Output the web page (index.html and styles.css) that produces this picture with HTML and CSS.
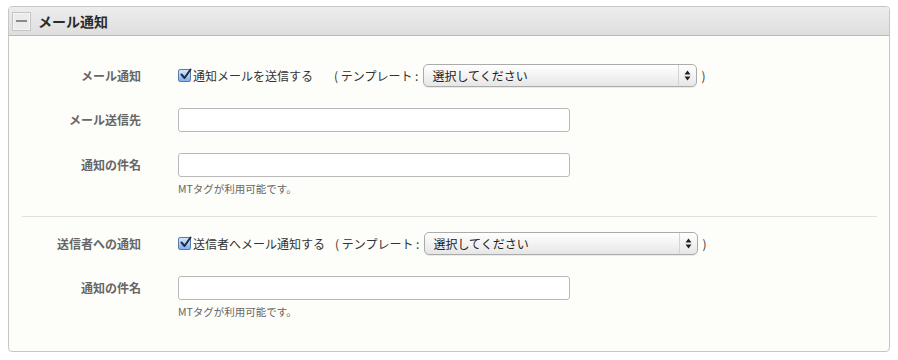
FILE: index.html
```html
<!DOCTYPE html>
<html lang="ja">
<head>
<meta charset="utf-8">
<title>メール通知</title>
<link rel="stylesheet" href="styles.css">
</head>
<body>
<div class="box">
  <div class="box-header">
    <span class="toggle"><span class="toggle-bar"></span></span>
    <h2 class="box-title">メール通知</h2>
  </div>
  <div class="box-body">
    <div class="row row-first">
      <div class="label">メール通知</div>
      <div class="field inline">
        <span class="check"><svg width="13" height="13" viewBox="0 0 13 13"><path d="M2.5 6.5 L5.5 10 L11.5 1.5" fill="none" stroke="#1b2b4a" stroke-width="2" stroke-linecap="round" stroke-linejoin="round"/></svg></span>
        <span class="check-text">通知メールを送信する</span>
        <span class="tpl tpl-wide">( テンプレート :</span>
        <span class="select"><span class="select-text">選択してください</span><span class="select-arrows"><svg width="7" height="11" viewBox="0 0 7 11"><path d="M3.5 0.5 L6.5 4.5 L0.5 4.5 Z M3.5 10.5 L6.5 6.5 L0.5 6.5 Z" fill="#222"/></svg></span></span>
        <span class="paren">)</span>
      </div>
    </div>
    <div class="row">
      <div class="label">メール送信先</div>
      <div class="field"><span class="input"></span></div>
    </div>
    <div class="row">
      <div class="label">通知の件名</div>
      <div class="field">
        <span class="input"></span>
        <div class="hint">MTタグが利用可能です。</div>
      </div>
    </div>
    <div class="divider"></div>
    <div class="row row-after-divider">
      <div class="label">送信者への通知</div>
      <div class="field inline">
        <span class="check"><svg width="13" height="13" viewBox="0 0 13 13"><path d="M2.5 6.5 L5.5 10 L11.5 1.5" fill="none" stroke="#1b2b4a" stroke-width="2" stroke-linecap="round" stroke-linejoin="round"/></svg></span>
        <span class="check-text">送信者へメール通知する</span>
        <span class="tpl">( テンプレート :</span>
        <span class="select"><span class="select-text">選択してください</span><span class="select-arrows"><svg width="7" height="11" viewBox="0 0 7 11"><path d="M3.5 0.5 L6.5 4.5 L0.5 4.5 Z M3.5 10.5 L6.5 6.5 L0.5 6.5 Z" fill="#222"/></svg></span></span>
        <span class="paren">)</span>
      </div>
    </div>
    <div class="row">
      <div class="label">通知の件名</div>
      <div class="field">
        <span class="input"></span>
        <div class="hint">MTタグが利用可能です。</div>
      </div>
    </div>
  </div>
</div>
</body>
</html>
```

FILE: styles.css
```css
* { box-sizing: border-box; }
html, body { margin: 0; padding: 0; background: #ffffff; }
body {
  padding: 6px 8px 0 8px;
  font-family: "Noto Sans CJK JP", "Liberation Sans", sans-serif;
  font-size: 12px;
  color: #333;
}
.box {
  width: 882px;
  height: 346px;
  border: 1px solid #c6c6c2;
  border-radius: 4px;
  background: #fdfdf9;
  overflow: hidden;
}
.box-header {
  height: 29px;
  display: flex;
  align-items: center;
  padding-left: 3px;
  background: linear-gradient(#ededed, #dedede);
  border-bottom: 1px solid #b9b9b9;
}
.toggle {
  width: 19px;
  height: 19px;
  border: 1px solid #c4c4c4;
  background: #ebebeb;
  box-shadow: inset 0 0 0 1px #f6f6f6;
  display: flex;
  align-items: center;
  justify-content: center;
}
.toggle-bar {
  width: 11px;
  height: 2px;
  background: #8a8a8a;
}
.box-title {
  margin: 0 0 0 7px;
  font-size: 14px;
  font-weight: bold;
  color: #2b2b2b;
  line-height: 20px;
}
.box-body {
  padding: 28px 12px 0 13px;
}
.row {
  display: grid;
  grid-template-columns: 119px 1fr;
  column-gap: 37px;
  margin-top: 21px;
}
.row-first { margin-top: 0; }
.row-after-divider { margin-top: 15px; }
.label {
  text-align: right;
  font-weight: bold;
  color: #666;
  line-height: 24px;
  height: 24px;
}
.field.inline {
  display: flex;
  align-items: center;
  height: 23px;
  color: #333;
}
.row-first .label, .row-after-divider .label { line-height: 23px; height: 23px; }
.check {
  width: 13px;
  height: 13px;
  border: 1px solid #5b7aa8;
  border-radius: 2px;
  background: linear-gradient(#d7e6fb, #7fb0ee);
  display: inline-flex;
  margin-right: 2px;
  position: relative;
}
.check svg { position: absolute; left: 0; top: -2px; }
.check-text { font-size: 12px; }
.tpl { margin-left: 10px; margin-right: 5px; }
.tpl-wide { margin-left: 21px; margin-right: 5px; }
.select {
  width: 274px;
  height: 23px;
  border: 1px solid #ababab;
  border-radius: 5px;
  background: linear-gradient(#ffffff, #f3f3f3 50%, #e6e6e6);
  box-shadow: 0 1px 1px rgba(0,0,0,0.08);
  display: flex;
  align-items: center;
}
.select-text {
  flex: 1;
  padding-left: 8px;
  color: #222;
}
.select-arrows {
  width: 18px;
  height: 100%;
  border-left: 1px solid #d4d4d4;
  display: flex;
  align-items: center;
  justify-content: center;
}
.paren { margin-left: 4px; }
.input {
  display: block;
  width: 392px;
  height: 24px;
  border: 1px solid #b9b9b9;
  border-radius: 3px;
  background: #fff;
}
.hint {
  margin-top: 5px;
  font-size: 10.5px;
  line-height: 13px;
  color: #666;
}
.divider {
  height: 1px;
  background: #e0e0dc;
  margin-top: 21px;
}
```
